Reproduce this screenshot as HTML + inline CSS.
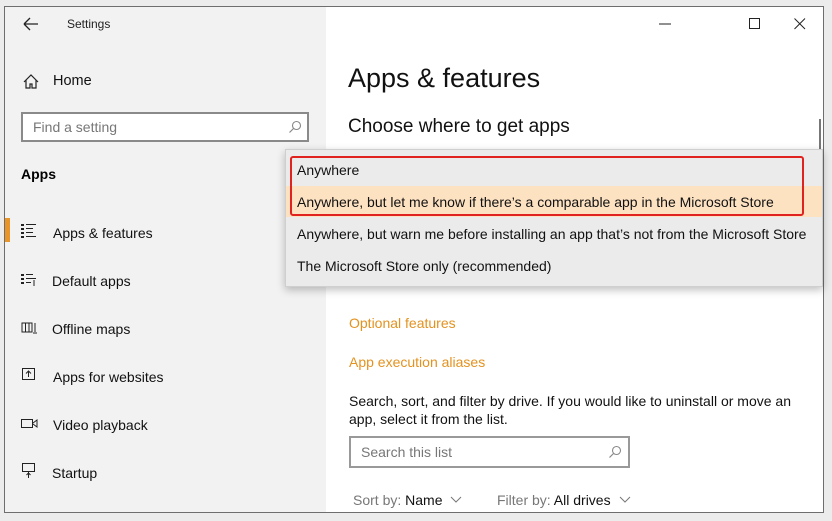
<!DOCTYPE html>
<html><head><meta charset="utf-8"><style>
*{margin:0;padding:0;box-sizing:border-box}
body{width:832px;height:521px;background:#ececec;font-family:"Liberation Sans",sans-serif;position:relative;overflow:hidden;color:#000}
.win{position:absolute;left:4px;top:6px;width:820px;height:507px;border:1px solid #6e6e6e;background:#fff;overflow:hidden}
.side{position:absolute;left:0;top:0;width:321px;height:100%;background:#f2f2f2}
.a{position:absolute;white-space:nowrap}
.nav{font-size:14px;color:#111}
.ic{position:absolute}
.link{color:#e3921f;font-size:14px}
.dd{font-size:14px;color:#111}
</style></head><body>
<div class="win">
 <div class="side">
  <svg class="ic" style="left:18px;top:10px" width="16" height="14"><path d="M1 7H15M1 7L7 1M1 7L7 13" stroke="#222" stroke-width="1.3" fill="none"/></svg>
  <div class="a" style="left:62px;top:10px;font-size:12px;color:#222">Settings</div>
  <svg class="ic" style="left:18px;top:67px" width="16" height="15"><path d="M1 8L8 1L15 8M3 6V14H7V10H9V14H13V6" stroke="#222" stroke-width="1.2" fill="none"/></svg>
  <div class="a nav" style="left:48px;top:66px;font-size:14.5px">Home</div>
  <div class="a" style="left:16px;top:105px;width:288px;height:30px;border:2px solid #8a8a8a;background:#fff"></div>
  <div class="a" style="left:28px;top:112px;font-size:14px;color:#777">Find a setting</div>
  <svg class="ic" style="left:283px;top:113px" width="14" height="14"><circle cx="8.5" cy="5.5" r="4" stroke="#888" fill="none" stroke-width="1.1"/><path d="M5.5 8.5L1.5 12.5" stroke="#888" stroke-width="1.2"/></svg>
  <div class="a" style="left:16px;top:159px;font-size:14px;font-weight:bold">Apps</div>
  <div class="a" style="left:0;top:211px;width:5px;height:24px;background:#e8962a"></div>
  <svg class="ic" style="left:16px;top:216px" width="16" height="15"><g fill="#222"><rect x="0" y="1" width="3" height="2"/><rect x="0" y="5" width="3" height="2"/><rect x="0" y="9" width="3" height="2"/><rect x="0" y="13" width="3" height="2"/></g><path d="M5 1.5H15M5 5.5H12M5 9.5H12M5 13.5H15" stroke="#222"/></svg>
  <div class="a nav" style="left:48px;top:218px">Apps &amp; features</div>
  <svg class="ic" style="left:16px;top:266px" width="16" height="14"><g fill="#222"><rect x="0" y="1" width="3" height="2"/><rect x="0" y="5" width="3" height="2"/><rect x="0" y="9" width="3" height="2"/></g><path d="M5 1.5H12M5 5.5H15M5 9.5H10M13 7V13" stroke="#222"/></svg>
  <div class="a nav" style="left:47px;top:266px">Default apps</div>
  <svg class="ic" style="left:16px;top:314px" width="17" height="15"><path d="M1 2V11H11V2ZM4.5 2V11M8 2V11M14 2V11M12 12H16" stroke="#222" fill="none"/></svg>
  <div class="a nav" style="left:47px;top:314px">Offline maps</div>
  <svg class="ic" style="left:17px;top:361px" width="14" height="13"><rect x="0.5" y="0.5" width="12" height="11" stroke="#222" fill="none"/><path d="M6.5 9V3M4 5.5L6.5 3L9 5.5" stroke="#222" fill="none"/></svg>
  <div class="a nav" style="left:48px;top:362px">Apps for websites</div>
  <svg class="ic" style="left:16px;top:412px" width="17" height="10"><rect x="0.5" y="0.5" width="11" height="8" stroke="#222" fill="none"/><path d="M12 4L16 1V8L12 5" stroke="#222" fill="none"/></svg>
  <div class="a nav" style="left:48px;top:410px">Video playback</div>
  <svg class="ic" style="left:17px;top:456px" width="14" height="16"><rect x="0.5" y="0.5" width="12" height="8" stroke="#222" fill="none"/><path d="M6.5 9V15M4.5 12L6.5 10L8.5 12" stroke="#222" fill="none"/></svg>
  <div class="a nav" style="left:47px;top:458px">Startup</div>
 </div>
 <svg class="ic" style="left:654px;top:16px" width="14" height="2"><path d="M0 1H12" stroke="#222"/></svg>
 <svg class="ic" style="left:744px;top:11px" width="12" height="12"><rect x="0.5" y="0.5" width="10" height="10" stroke="#222" fill="none"/></svg>
 <svg class="ic" style="left:789px;top:11px" width="12" height="12"><path d="M0.5 0.5L11 11M11 0.5L0.5 11" stroke="#222"/></svg>
 <div class="a" style="left:343px;top:56px;font-size:27px;font-weight:300;color:#111">Apps &amp; features</div>
 <div class="a" style="left:343px;top:109px;font-size:19px;color:#111">Choose where to get apps</div>
 <div class="a" style="left:814px;top:112px;width:2px;height:32px;background:#777"></div>
 <div class="a link" style="left:344px;top:308px">Optional features</div>
 <div class="a link" style="left:344px;top:347px">App execution aliases</div>
 <div class="a" style="left:344px;top:385px;font-size:14px;line-height:18px;color:#111">Search, sort, and filter by drive. If you would like to uninstall or move an<br>app, select it from the list.</div>
 <div class="a" style="left:344px;top:429px;width:281px;height:32px;border:2px solid #999;background:#fff"></div>
 <div class="a" style="left:356px;top:437px;font-size:14px;color:#777">Search this list</div>
 <svg class="ic" style="left:603px;top:438px" width="14" height="14"><circle cx="8.5" cy="5.5" r="4" stroke="#888" fill="none" stroke-width="1.1"/><path d="M5.5 8.5L1.5 12.5" stroke="#888" stroke-width="1.2"/></svg>
 <div class="a" style="left:348px;top:485px;font-size:14px;color:#777">Sort by: <span style="color:#111">Name</span></div>
 <svg class="ic" style="left:445px;top:489px" width="12" height="8"><path d="M1 1L6 6L11 1" stroke="#777" fill="none"/></svg>
 <div class="a" style="left:492px;top:485px;font-size:14px;color:#777">Filter by: <span style="color:#111">All drives</span></div>
 <svg class="ic" style="left:614px;top:489px" width="12" height="8"><path d="M1 1L6 6L11 1" stroke="#777" fill="none"/></svg>
</div>
<div class="a" style="left:285px;top:149px;width:538px;height:138px;background:#ebebeb;border:1px solid #cfcfcf;box-shadow:0 3px 8px rgba(0,0,0,.25)">
 <div class="a" style="left:0;top:36px;width:536px;height:31px;background:#fde2c2"></div>
 <div class="a" style="left:4px;top:6px;width:514px;height:60px;border:2px solid #e0231f;border-radius:3px"></div>
 <div class="a dd" style="left:11px;top:12px">Anywhere</div>
 <div class="a dd" style="left:11px;top:44px">Anywhere, but let me know if there’s a comparable app in the Microsoft Store</div>
 <div class="a dd" style="left:11px;top:76px">Anywhere, but warn me before installing an app that’s not from the Microsoft Store</div>
 <div class="a dd" style="left:11px;top:108px">The Microsoft Store only (recommended)</div>
</div>
</body></html>
